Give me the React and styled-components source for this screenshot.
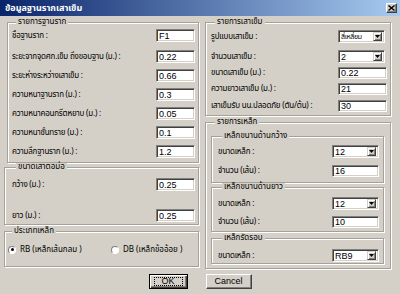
import React from 'react'
import styled, { createGlobalStyle } from 'styled-components'

const GlobalStyle = createGlobalStyle`
  body {
    margin: 0;
    background: #d4d0c8;
  }
`

const Window = styled.div`
  width: 400px;
  height: 294px;
  background: #d4d0c8;
  display: flex;
  flex-direction: column;
  overflow: hidden;
  font-family: "Noto Sans Thai", "Noto Sans", "DejaVu Sans", sans-serif;
  font-size: 8px;
  color: #000;
`

const TitleBar = styled.div`
  height: 16px;
  flex: none;
  display: flex;
  align-items: center;
  justify-content: space-between;
  padding: 0 3px 0 5px;
  background: linear-gradient(to right, #0a246a, #a6caf0);
  color: #fff;
  font-weight: bold;
  font-size: 9px;
`

const CloseButton = styled.div`
  width: 9px;
  height: 8px;
  display: flex;
  align-items: center;
  justify-content: center;
  background: #d4d0c8;
  border: 1px solid;
  border-color: #fff #404040 #404040 #fff;
  box-shadow: inset -1px -1px #808080;
`

const Columns = styled.div`
  display: flex;
  gap: 6px;
  padding: 2px 0 0 4px;
`

const Column = styled.div`
  display: flex;
  flex-direction: column;
  width: ${({ $w }) => $w}px;
`

const Group = styled.fieldset`
  margin: ${({ $mt }) => $mt || 0}px 0 0 ${({ $ml }) => $ml || 0}px;
  padding: ${({ $pad }) => $pad};
  min-width: 0;
  border: 1px solid #a4a09a;
  box-shadow: 1px 1px 0 #fff, inset 1px 1px 0 #fff;
  display: flex;
  flex-direction: column;
`

const Legend = styled.legend`
  padding: 0 2px;
  margin-left: 4px;
  line-height: 8px;
  font-size: 8px;
  background: #d4d0c8;
`

const Row = styled.div`
  display: grid;
  grid-template-columns: 1fr ${({ $cw }) => $cw}px;
  align-items: center;
  height: ${({ $h }) => $h || 13}px;
  margin-top: ${({ $mt }) => $mt || 0}px;
  white-space: nowrap;
`

const Label = styled.span`
  font-size: 8px;
  line-height: 10px;
  letter-spacing: -0.2px;
`

const TextBox = styled.div`
  box-sizing: border-box;
  width: ${({ $w }) => $w}px;
  height: 100%;
  background: #fff;
  border: 1px solid;
  border-color: #808080 #fff #fff #808080;
  box-shadow: inset 1px 1px #404040, inset -1px -1px #d4d0c8;
  padding-left: 2px;
  display: flex;
  align-items: center;
  font-family: "Liberation Sans", Arial, sans-serif;
  font-size: 9px;
`

const ComboBox = styled(TextBox)`
  justify-content: space-between;
  padding-right: 2px;
  overflow: hidden;
  font-family: "Liberation Sans", "Noto Sans Thai", sans-serif;
  font-size: ${({ $thai }) => ($thai ? 7 : 9)}px;
  letter-spacing: ${({ $thai }) => ($thai ? '-0.3px' : '0')};
`

const ComboButton = styled.div`
  flex: none;
  width: 9px;
  height: 9px;
  display: flex;
  align-items: center;
  justify-content: center;
  background: #d4d0c8;
  box-sizing: border-box;
  border: 1px solid;
  border-color: #d4d0c8 #404040 #404040 #d4d0c8;
  box-shadow: inset 1px 1px #fff, inset -1px -1px #808080;
`

const RadioRow = styled.div`
  display: flex;
  align-items: center;
  height: 13px;
`

const RadioItem = styled.label`
  display: flex;
  align-items: center;
  gap: 4px;
  width: ${({ $w }) => $w}px;
  font-size: 8px;
  white-space: nowrap;
`

const RadioCircle = styled.span`
  width: 8px;
  height: 8px;
  border-radius: 50%;
  background: #fff;
  box-sizing: border-box;
  border: 1px solid;
  border-color: #808080 #fff #fff #808080;
  display: flex;
  align-items: center;
  justify-content: center;
  &::after {
    content: '';
    width: 3px;
    height: 3px;
    border-radius: 50%;
    background: ${({ $on }) => ($on ? '#000' : 'transparent')};
  }
`

const Footer = styled.div`
  display: flex;
  justify-content: center;
  gap: 18px;
  margin-top: 5px;
`

const Button = styled.div`
  box-sizing: border-box;
  width: ${({ $w }) => $w}px;
  height: 15px;
  display: flex;
  align-items: center;
  justify-content: center;
  background: #d4d0c8;
  font-family: "Liberation Sans", Arial, sans-serif;
  font-size: 9px;
  line-height: 9px;
  border: 1px solid;
  border-color: ${({ $def }) => ($def ? '#000' : '#fff #404040 #404040 #fff')};
  box-shadow: ${({ $def }) =>
    $def
      ? 'inset 1px 1px #fff, inset -1px -1px #404040, inset -2px -2px #808080'
      : 'inset -1px -1px #808080'};
`

const Focus = styled.span`
  box-sizing: border-box;
  width: calc(100% - 8px);
  height: 9px;
  border: 1px dotted #000;
  display: flex;
  align-items: center;
  justify-content: center;
  line-height: 7px;
`

const Arrow = () => (
  <svg width="5" height="3" viewBox="0 0 5 3">
    <path d="M0 0h5L2.5 3z" fill="#000" />
  </svg>
)

const Combo = ({ w, value, thai }) => (
  <ComboBox $w={w} $thai={thai}>
    <span>{value}</span>
    <ComboButton>
      <Arrow />
    </ComboButton>
  </ComboBox>
)

const baseRows = [
  ['ชื่อฐานราก :', 'F1'],
  ['ระยะจากจุดศก.เข็ม ถึงขอบฐาน  (ม.) :', '0.22'],
  ['ระยะห่างระหว่างเสาเข็ม :', '0.66'],
  ['ความหนาฐานราก (ม.) :', '0.3'],
  ['ความหนาคอนกรีตหยาบ  (ม.) :', '0.05'],
  ['ความหนาชั้นทราย  (ม.) :', '0.1'],
  ['ความลึกฐานราก  (ม.) :', '1.2'],
]

export default function App() {
  return (
    <Window>
      <GlobalStyle />
      <TitleBar>
        <span>ข้อมูลฐานรากเสาเข็ม</span>
        <CloseButton>
          <svg width="7" height="6" viewBox="0 0 7 6">
            <path d="M0.5 0.5l6 5M6.5 0.5l-6 5" stroke="#000" strokeWidth="1.4" />
          </svg>
        </CloseButton>
      </TitleBar>

      <Columns>
        <Column $w={195}>
          <Group $ml={3} $pad="3px 3px 4px 4px">
            <Legend>รายการฐานราก</Legend>
            {baseRows.map(([label, value], i) => (
              <Row key={label} $cw={39} $mt={i === 0 ? 0 : i === 1 ? 8 : 6}>
                <Label>{label}</Label>
                <TextBox $w={39}>{value}</TextBox>
              </Row>
            ))}
          </Group>

          <Group $pad="7px 3px 2px 7px">
            <Legend>ขนาดเสาตอม่อ</Legend>
            <Row $cw={39}>
              <Label>กว้าง (ม.) :</Label>
              <TextBox $w={39}>0.25</TextBox>
            </Row>
            <Row $cw={39} $mt={18}>
              <Label>ยาว (ม.) :</Label>
              <TextBox $w={39}>0.25</TextBox>
            </Row>
          </Group>

          <Group $mt={2} $pad="8px 3px 10px 3px">
            <Legend>ประเภทเหล็ก</Legend>
            <RadioRow>
              <RadioItem $w={103}>
                <RadioCircle $on />
                <span>RB (เหล็กเส้นกลม )</span>
              </RadioItem>
              <RadioItem>
                <RadioCircle />
                <span>DB  (เหล็กข้ออ้อย )</span>
              </RadioItem>
            </RadioRow>
          </Group>
        </Column>

        <Column $w={186}>
          <Group $pad="4px 3px 3px 5px">
            <Legend>รายการเสาเข็ม</Legend>
            <Row $cw={49}>
              <Label>รูปแบบเสาเข็ม :</Label>
              <Combo w={47} value="สี่เหลี่ยม" thai />
            </Row>
            <Row $cw={49} $mt={7}>
              <Label>จำนวนเสาเข็ม :</Label>
              <Combo w={47} value="2" />
            </Row>
            <Row $cw={49} $mt={4} $h={12}>
              <Label>ขนาดเสาเข็ม (ม.) :</Label>
              <TextBox $w={49}>0.22</TextBox>
            </Row>
            <Row $cw={49} $mt={4} $h={12}>
              <Label>ความยาวเสาเข็ม (ม.) :</Label>
              <TextBox $w={49}>21</TextBox>
            </Row>
            <Row $cw={49} $mt={5} $h={12}>
              <Label>เสาเข็มรับ นน.ปลอดภัย (ตัน/ต้น) :</Label>
              <TextBox $w={49}>30</TextBox>
            </Row>
          </Group>

          <Group $mt={2} $pad="6px 6px 4px 5px">
            <Legend>รายการเหล็ก</Legend>

            <Group $pad="5px 4px 5px 6px">
              <Legend>เหล็กขนานด้านกว้าง</Legend>
              <Row $cw={47}>
                <Label>ขนาดเหล็ก :</Label>
                <Combo w={47} value="12" />
              </Row>
              <Row $cw={47} $mt={7} $h={12}>
                <Label>จำนวน  (เส้น) :</Label>
                <TextBox $w={47}>16</TextBox>
              </Row>
            </Group>

            <Group $pad="6px 4px 3px 6px">
              <Legend>เหล็กขนานด้านยาว</Legend>
              <Row $cw={47}>
                <Label>ขนาดเหล็ก :</Label>
                <Combo w={47} value="12" />
              </Row>
              <Row $cw={47} $mt={6} $h={12}>
                <Label>จำนวน  (เส้น) :</Label>
                <TextBox $w={47}>10</TextBox>
              </Row>
            </Group>

            <Group $mt={2} $pad="7px 4px 1px 6px">
              <Legend>เหล็กรัดรอบ</Legend>
              <Row $cw={47}>
                <Label>ขนาดเหล็ก :</Label>
                <Combo w={47} value="RB9" />
              </Row>
            </Group>
          </Group>
        </Column>
      </Columns>

      <Footer>
        <Button $w={39} $def>
          <Focus>OK</Focus>
        </Button>
        <Button $w={46}>Cancel</Button>
      </Footer>
    </Window>
  )
}
